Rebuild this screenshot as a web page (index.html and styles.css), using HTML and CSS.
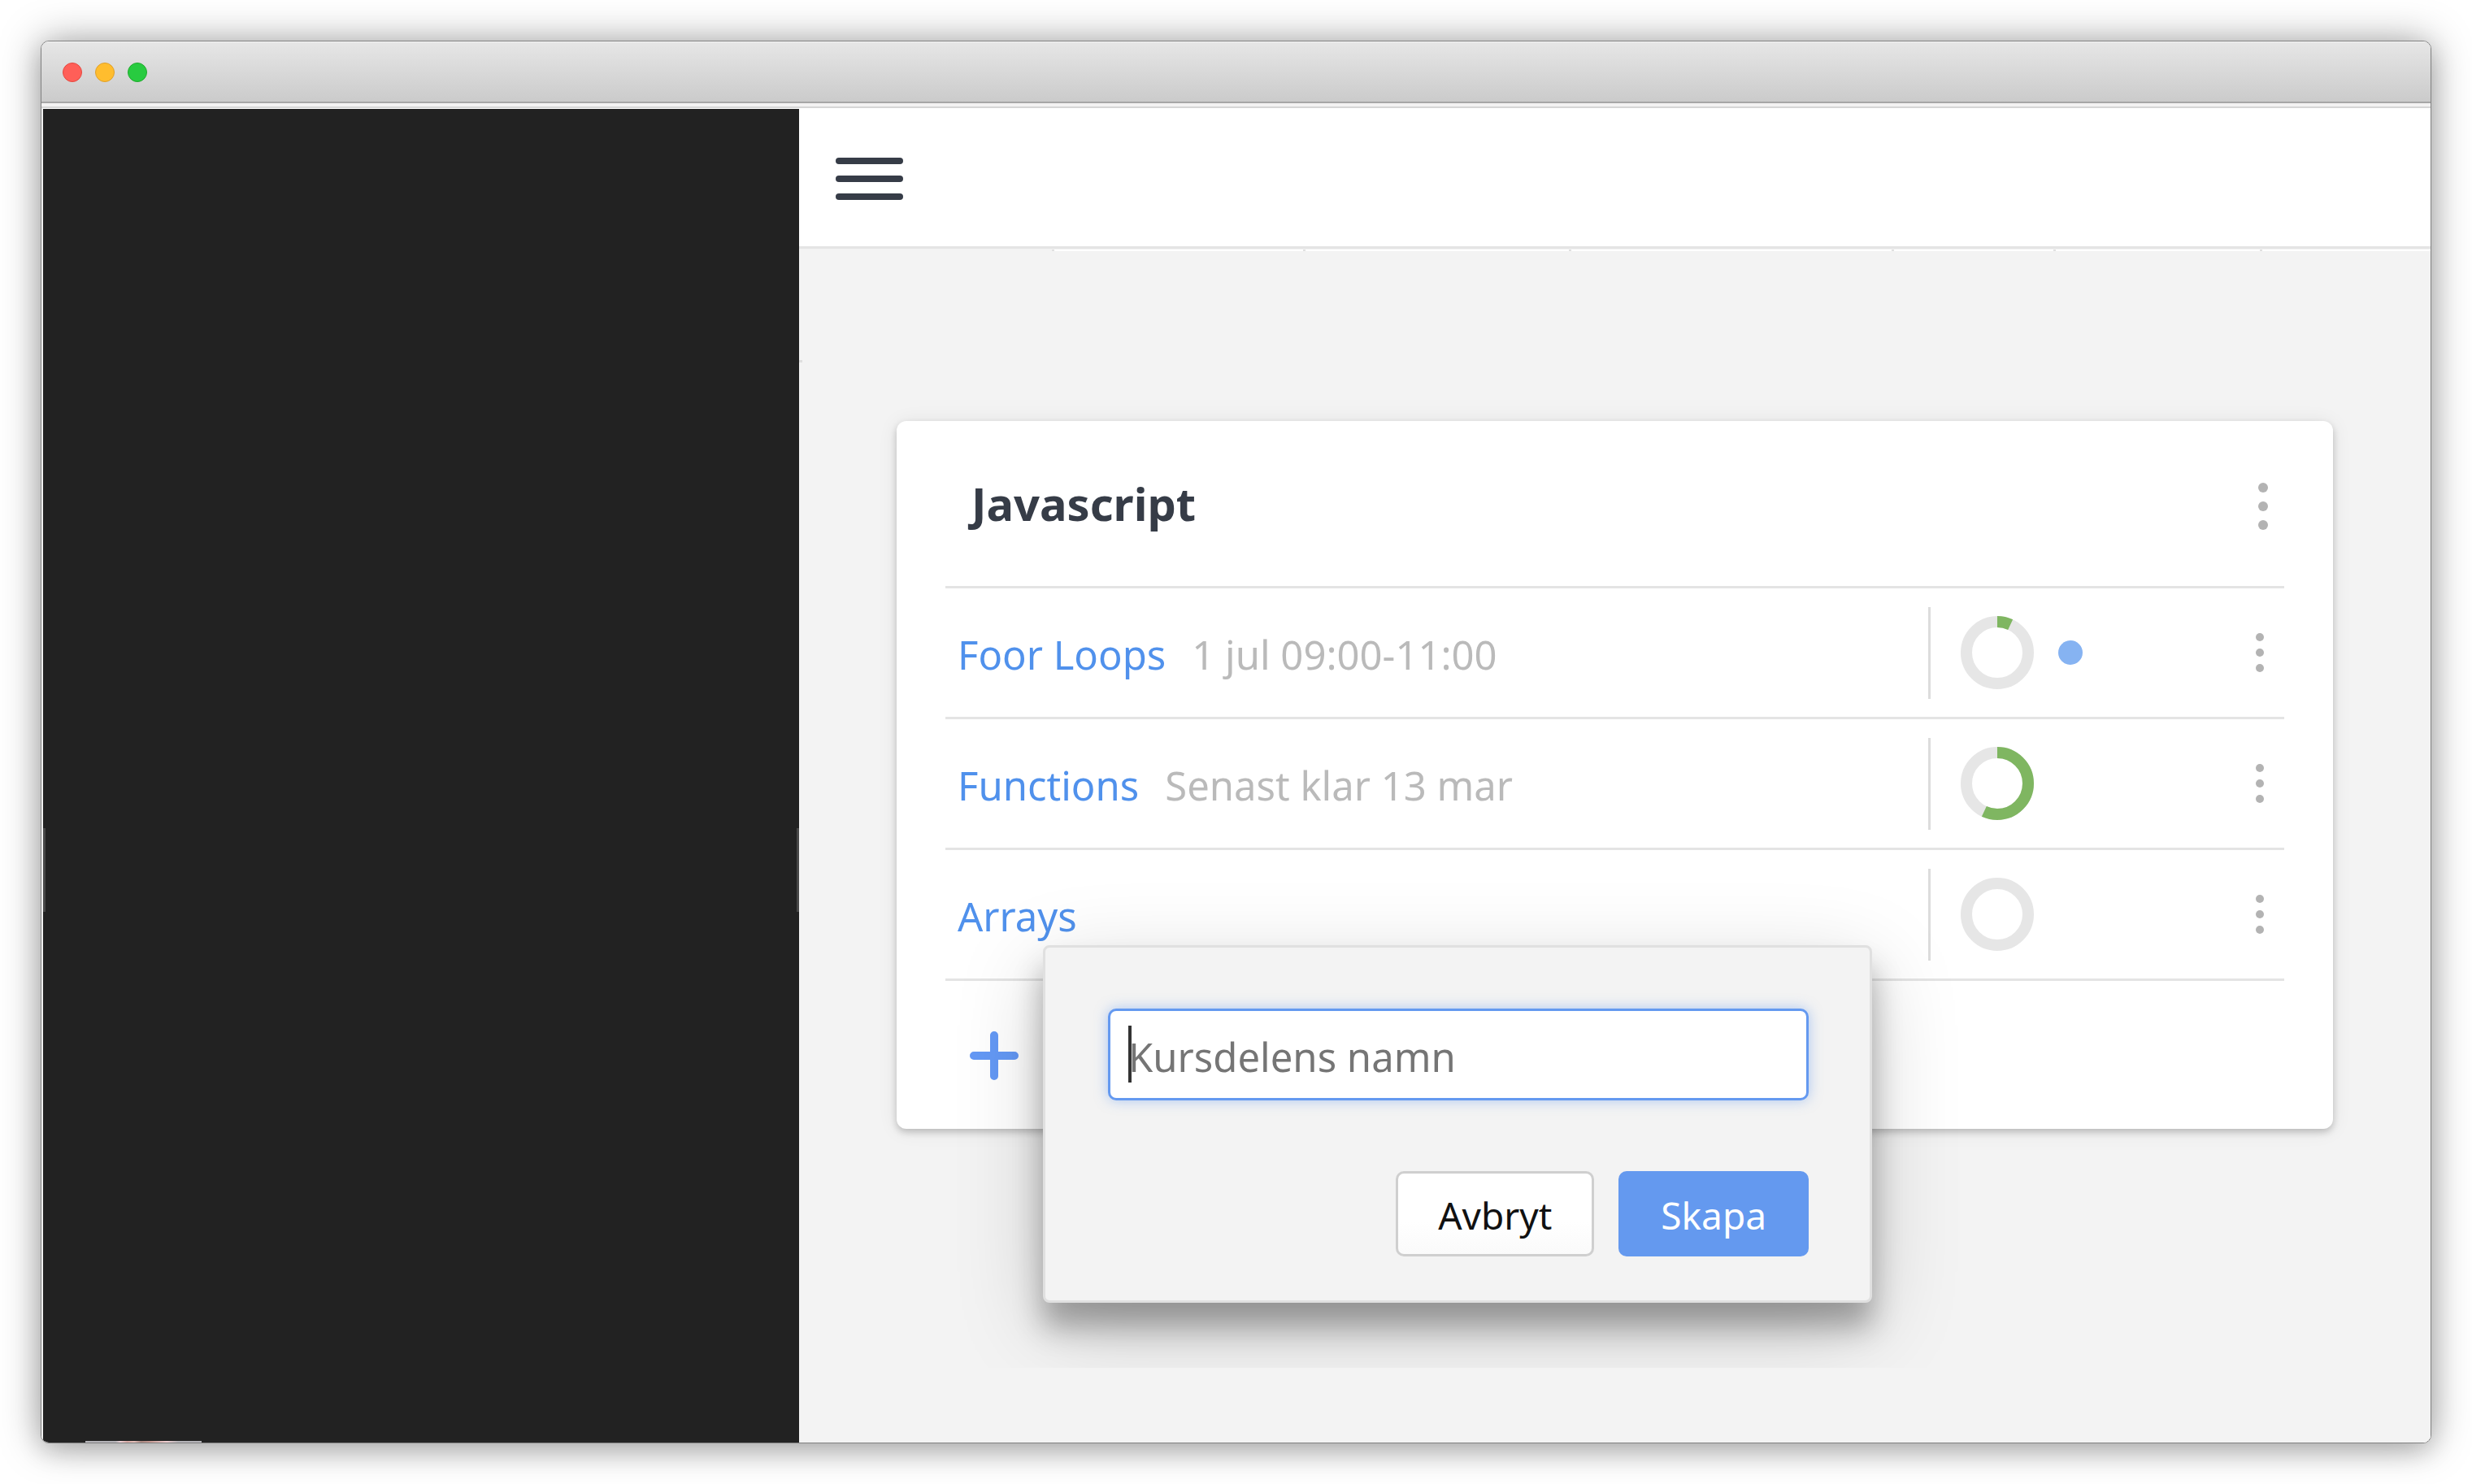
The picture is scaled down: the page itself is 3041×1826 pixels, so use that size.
FILE: index.html
```html
<!DOCTYPE html>
<html lang="sv">
<head>
<meta charset="utf-8">
<title>Javascript</title>
<link rel="stylesheet" href="styles.css">
</head>
<body>
<div class="window">
  <div class="titlebar">
    <span class="light light-close"></span>
    <span class="light light-min"></span>
    <span class="light light-max"></span>
  </div>
  <div class="toolbar-edge"></div>
  <div class="app">
    <aside class="sidebar"><div class="avatar"></div></aside>
    <div class="content">
      <header class="topbar">
        <button class="icon-button menu" type="button" aria-label="Meny"><span></span><span></span><span></span></button>
      </header>
      <div class="tabs"><i class="tab tab-a"></i><i class="tab tab-b"></i><i class="tab tab-c"></i><i class="tab tab-d"></i><i class="tab tab-e"></i><i class="tab tab-f"></i></div>
      <main class="workspace">
        <section class="card">
          <div class="card-head">
            <h1 class="card-title">Javascript</h1>
            <button class="icon-button more more-large" type="button" aria-label="Fler val"><span></span><span></span><span></span></button>
          </div>
          <ul class="parts">
            <li class="part">
              <a class="part-name" href="#">Foor Loops</a>
              <span class="part-date">1 jul 09:00-11:00</span>
              <div class="part-status">
                <svg class="ring" viewBox="0 0 90 90"><circle class="ring-track" cx="45" cy="45" r="38"/><circle class="ring-value" cx="45" cy="45" r="38" pathLength="100" stroke-dasharray="7 100"/></svg>
                <span class="dot"></span>
                <button class="icon-button more" type="button" aria-label="Fler val"><span></span><span></span><span></span></button>
              </div>
            </li>
            <li class="part">
              <a class="part-name" href="#">Functions</a>
              <span class="part-date">Senast klar 13 mar</span>
              <div class="part-status">
                <svg class="ring" viewBox="0 0 90 90"><circle class="ring-track" cx="45" cy="45" r="38"/><circle class="ring-value" cx="45" cy="45" r="38" pathLength="100" stroke-dasharray="57 100"/></svg>
                <button class="icon-button more" type="button" aria-label="Fler val"><span></span><span></span><span></span></button>
              </div>
            </li>
            <li class="part">
              <a class="part-name" href="#">Arrays</a>
              <div class="part-status">
                <svg class="ring" viewBox="0 0 90 90"><circle class="ring-track" cx="45" cy="45" r="38"/></svg>
                <button class="icon-button more" type="button" aria-label="Fler val"><span></span><span></span><span></span></button>
              </div>
            </li>
          </ul>
          <button class="icon-button add" type="button" aria-label="Lägg till">
            <svg class="add-icon" viewBox="0 0 60 60"><path d="M30 5V55M5 30H55"/></svg>
          </button>
          <form class="dialog">
            <div class="field">
              <input class="field-input" type="text" placeholder="Kursdelens namn" aria-label="Kursdelens namn">
              <span class="caret"></span>
            </div>
            <div class="actions">
              <button class="button" type="button">Avbryt</button>
              <button class="button button-primary" type="submit">Skapa</button>
            </div>
          </form>
        </section>
      </main>
    </div>
  </div>
</div>
</body>
</html>
```
FILE: styles.css
```css
* {
  box-sizing: border-box;
}

body {
  margin: 0;
  min-height: 100vh;
  padding: 50px;
  display: flex;
  background: #fff;
  font-family: "Noto Sans", "Open Sans", sans-serif;
  font-size: 49px;
  line-height: 68px;
}

.window {
  flex: 1;
  min-width: 0;
  display: flex;
  flex-direction: column;
  border: 1px solid #808080;
  border-radius: 10px;
  overflow: hidden;
  background: #fff;
  box-shadow: 0 0 50px rgba(0, 0, 0, 0.35), 0 10px 30px rgba(0, 0, 0, 0.15);
}

.titlebar {
  height: 76px;
  padding: 0 26px;
  display: flex;
  align-items: center;
  gap: 16px;
  background: linear-gradient(#e6e6e6, #cbcbcb);
  border-top: 1px solid #f4f4f4;
  border-bottom: 2px solid #a6a6a6;
}

.light {
  width: 24px;
  height: 24px;
  border: 1px solid;
  border-radius: 50%;
}

.light-close {
  background: #ff5f58;
  border-color: #e5483f;
}

.light-min {
  background: #ffbd2e;
  border-color: #e0a028;
}

.light-max {
  background: #28cb40;
  border-color: #20aa2c;
}

.toolbar-edge {
  height: 6px;
  background: #f3f2f2;
  border-bottom: 2px solid #d6d6d6;
}

.app {
  flex: 1;
  display: flex;
  padding-left: 2px;
  background: linear-gradient(90deg, #f2f2f2 2px, #fff 2px);
}

/* The selected row shows as a short lighter mark on both edges. */
.sidebar {
  flex: 0 0 930px;
  margin-top: 1px;
  padding: 0 52px;
  display: flex;
  align-items: flex-end;
  background:
    linear-gradient(#484848, #484848) left 885px / 3px 103px no-repeat,
    linear-gradient(#484848, #484848) right 885px / 3px 103px no-repeat,
    #222;
}

.avatar {
  width: 143px;
  height: 2px;
  background: linear-gradient(90deg, #b4b3b8 26%, #f0d5da 30%, #d9aaa5 36%, #e5c0ba 42%, #a98780 48%, #c79a93 56%, #f0cfd2 70%, #b4b3b8 80%);
}

.content {
  flex: 1;
  min-width: 0;
  background: linear-gradient(#dedede, #dedede) left 310px / 4px 3px no-repeat, #f3f3f3;
}

.topbar {
  height: 173px;
  padding: 4px 45px 0;
  display: flex;
  align-items: center;
  background: #fff;
  border-bottom: 3px solid #e4e4e4;
}

.icon-button {
  margin: 0;
  padding: 0;
  border: 0;
  background: none;
  display: flex;
  flex-direction: column;
  align-items: center;
  cursor: pointer;
}

.menu {
  gap: 14px;
}

.menu span {
  width: 83px;
  height: 8px;
  border-radius: 4px;
  background: #363c47;
}

.tabs {
  height: 3px;
  padding-left: 311px;
  display: flex;
  border-top: 1px solid #f2f2f2;
}

.tab {
  background: #fff;
  border-left: 3px solid #e0e0e0;
}

.tab-a {
  flex: 309 1 0;
}

.tab-b {
  flex: 328 1 0;
}

.tab-c {
  flex: 398 1 0;
}

.tab-d {
  flex: 198 1 0;
}

.tab-e {
  flex: 254 1 0;
}

.tab-f {
  flex: 209 1 0;
}

.workspace {
  padding: 209px 120px 294px;
  overflow: hidden;
}

.card {
  position: relative;
  padding: 0 60px 60px;
  border-radius: 12px;
  background: #fff;
  box-shadow: 0 4px 8px rgba(0, 0, 0, 0.2), 0 2px 24px rgba(0, 0, 0, 0.08);
}

.card-head {
  height: 203px;
  padding: 0 20px 0 32px;
  display: flex;
  align-items: center;
  justify-content: space-between;
}

.card-title {
  margin: 0;
  padding-bottom: 2px;
  color: #363c47;
  font-size: 56px;
  font-weight: 700;
}

.parts {
  margin: 0;
  padding: 0;
  list-style: none;
  border-bottom: 3px solid #e4e4e4;
}

.part {
  height: 161px;
  padding-left: 15px;
  display: flex;
  align-items: center;
  gap: 32px;
  border-top: 3px solid #e4e4e4;
}

.part-name,
.part-date {
  padding-top: 4px;
}

.part-name {
  color: #5091ec;
  text-decoration: none;
}

.part-date {
  color: #bababa;
}

.part-status {
  flex: 0 0 438px;
  height: 113px;
  margin-left: auto;
  padding: 0 25px 0 37px;
  display: flex;
  align-items: center;
  gap: 30px;
  border-left: 3px solid #dcdcdc;
}

.ring {
  width: 90px;
  height: 90px;
  fill: none;
  stroke-width: 14px;
}

.ring-track {
  stroke: #e6e6e6;
}

.ring-value {
  stroke: #7fb661;
  transform: rotate(-90deg);
  transform-origin: center;
}

.dot {
  width: 30px;
  height: 30px;
  border-radius: 50%;
  background: #86b3f2;
}

.more {
  margin-left: auto;
  gap: 9px;
}

.more span {
  width: 10px;
  height: 10px;
  border-radius: 50%;
  background: #b3b3b3;
}

.more-large {
  padding-top: 6px;
  gap: 11px;
}

.more-large span {
  width: 12px;
  height: 12px;
}

.add {
  margin: 62px 30px 0;
}

.add-icon {
  width: 60px;
  height: 60px;
  fill: none;
  stroke: #6499f5;
  stroke-width: 10px;
  stroke-linecap: round;
}

.dialog {
  position: absolute;
  left: 180px;
  top: 645px;
  width: 1020px;
  padding: 75px 75px 54px 77px;
  border: 3px solid #e0e0e0;
  border-radius: 8px;
  background: #f3f3f3;
  box-shadow: 0 30px 36px rgba(0, 0, 0, 0.3), 0 30px 110px rgba(0, 0, 0, 0.18);
}

.field {
  position: relative;
}

.field-input {
  display: block;
  width: 100%;
  height: 113px;
  padding: 4px 22px 0;
  border: 3px solid #6499f0;
  border-radius: 10px;
  outline: 0;
  background: #fff;
  box-shadow: 0 0 16px rgba(100, 153, 240, 0.5);
  font: inherit;
}

.field-input::placeholder {
  color: #757575;
  opacity: 1;
}

.caret {
  position: absolute;
  left: 25px;
  top: 21px;
  width: 4px;
  height: 70px;
  background: #333;
}

.actions {
  margin-top: 87px;
  display: flex;
  justify-content: flex-end;
  gap: 30px;
}

.button {
  height: 105px;
  padding: 2px 49px 0;
  border: 3px solid #cfcfcf;
  border-radius: 10px;
  background: linear-gradient(#fff 60%, #fafafa);
  color: #111;
  font: inherit;
  font-size: 46px;
}

.button-primary {
  border-color: #6499ef;
  background: #6499ef;
  color: #fff;
}
```
